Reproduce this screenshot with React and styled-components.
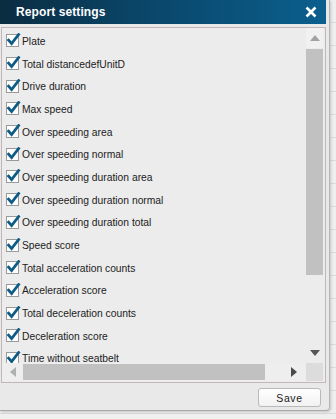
import React from "react"
import styled, { createGlobalStyle } from "styled-components"

const columns = [
  "Plate",
  "Total distancedefUnitD",
  "Drive duration",
  "Max speed",
  "Over speeding area",
  "Over speeding normal",
  "Over speeding duration area",
  "Over speeding duration normal",
  "Over speeding duration total",
  "Speed score",
  "Total acceleration counts",
  "Acceleration score",
  "Total deceleration counts",
  "Deceleration score",
  "Time without seatbelt",
]

const Global = createGlobalStyle`
  html, body {
    margin: 0;
    padding: 0;
    height: 100%;
    overflow: hidden;
  }
  body {
    background-color: #efefef;
    background-image: repeating-linear-gradient(
      to bottom,
      transparent 0,
      transparent 22px,
      #dcdcdc 22px,
      #dcdcdc 23px
    );
    font-family: "Liberation Sans", Arial, sans-serif;
  }
`

const Check = () => (
  <svg width="15" height="14" viewBox="0 0 15 14">
    <rect x="0.5" y="1.5" width="12" height="12" fill="#fff" stroke="#9a9a9a" />
    <path
      d="M2.6 7.2 L5.6 10.6 L12.6 1.6"
      fill="none"
      stroke="#0e5c86"
      strokeWidth="2.8"
      strokeLinecap="square"
    />
  </svg>
)

const Tri = ({ dir, color }) => {
  const pts = {
    up: "0,6 5,0 10,6",
    down: "0,0 10,0 5,6",
    left: "6,0 6,10 0,5",
    right: "0,0 0,10 6,5",
  }[dir]
  const w = dir === "up" || dir === "down" ? 10 : 6
  const h = dir === "up" || dir === "down" ? 6 : 10
  return (
    <svg width={w} height={h} viewBox={`0 0 ${w} ${h}`}>
      <polygon points={pts} fill={color} />
    </svg>
  )
}

const App = () => (
  <>
    <Global />
    <Dialog>
      <Header>
        <Title>Report settings</Title>
        <Close>
          <svg width="12" height="12" viewBox="0 0 12 12">
            <path d="M1.5 1.5 L10.5 10.5 M10.5 1.5 L1.5 10.5" stroke="#fff" strokeWidth="2.6" />
          </svg>
        </Close>
      </Header>
      <Panel>
        <List>
          {columns.map((c) => (
            <Row key={c}>
              <Check />
              <Label>{c}</Label>
            </Row>
          ))}
        </List>
        <VScroll>
          <ArrowBtn $light>
            <Tri dir="up" color="#a3a3a3" />
          </ArrowBtn>
          <VThumb />
          <ArrowBtn>
            <Tri dir="down" color="#555" />
          </ArrowBtn>
        </VScroll>
        <HScroll>
          <HArrow>
            <Tri dir="left" color="#b0b0b0" />
          </HArrow>
          <HThumb />
          <HArrow>
            <Tri dir="right" color="#4a4a4a" />
          </HArrow>
        </HScroll>
        <Corner />
      </Panel>
      <Footer>
        <SaveButton>Save</SaveButton>
      </Footer>
    </Dialog>
  </>
)

const Dialog = styled.div`
  width: 329px;
  height: 410px;
  background: #e9e9e9;
  border-right: 1px solid #b5b5b5;
  border-bottom: 1px solid #a8a8a8;
  border-radius: 0 0 4px 0;
  box-shadow: 1px 1px 3px rgba(0, 0, 0, 0.18);
  display: flex;
  flex-direction: column;
`
const Header = styled.div`
  height: 24px;
  margin-right: 3px;
  padding: 0 9px 0 16px;
  display: flex;
  align-items: center;
  justify-content: space-between;
  background: linear-gradient(to right, #0b2c41 0%, #0a4466 40%, #0b5f8e 100%);
`
const Title = styled.span`
  color: #fff;
  font-weight: bold;
  font-size: 12px;
  letter-spacing: 0.1px;
`
const Close = styled.span`
  display: flex;
`
const Panel = styled.div`
  margin: 3px 3px 0 1px;
  height: 353px;
  border: 1px solid #c2b6b6;
  background: #ececec;
  padding: 0 2px 1px 0;
  display: grid;
  grid-template-columns: 1fr 17px;
  grid-template-rows: 1fr 18px;
`
const List = styled.div`
  overflow: hidden;
  padding: 1px 0 0 4px;
`
const Row = styled.div`
  height: 22.7px;
  display: flex;
  align-items: center;
  gap: 1px;
`
const Label = styled.span`
  font-size: 10.3px;
  color: #222;
  padding-top: 2px;
`
const VScroll = styled.div`
  display: flex;
  flex-direction: column;
  background: #ececec;
`
const ArrowBtn = styled.div`
  height: 20px;
  display: flex;
  align-items: center;
  justify-content: center;
  background: ${(p) => (p.$light ? "#f1f1f1" : "#ececec")};
  &:last-child {
    margin-top: auto;
  }
`
const VThumb = styled.div`
  margin-top: 1px;
  height: 226px;
  background: #c1c1c1;
`
const HScroll = styled.div`
  display: flex;
  align-items: stretch;
  background: #eeeeee;
`
const HArrow = styled.div`
  width: 21px;
  display: flex;
  align-items: center;
  justify-content: center;
  &:last-child {
    margin-left: auto;
    width: 24px;
  }
`
const HThumb = styled.div`
  width: 242px;
  margin: 1px 0;
  background: #c1c1c1;
`
const Corner = styled.div`
  background: #dcdcdc;
`
const Footer = styled.div`
  display: flex;
  justify-content: flex-end;
  padding: 5px 8px 0 0;
`
const SaveButton = styled.button`
  width: 63px;
  height: 19px;
  padding: 0;
  border: 1px solid #b9b9b9;
  border-radius: 3px;
  background: linear-gradient(to bottom, #ffffff, #f1f1f1);
  font-family: "Liberation Sans", Arial, sans-serif;
  font-size: 10.5px;
  letter-spacing: 0.6px;
  color: #222;
`

export default App
